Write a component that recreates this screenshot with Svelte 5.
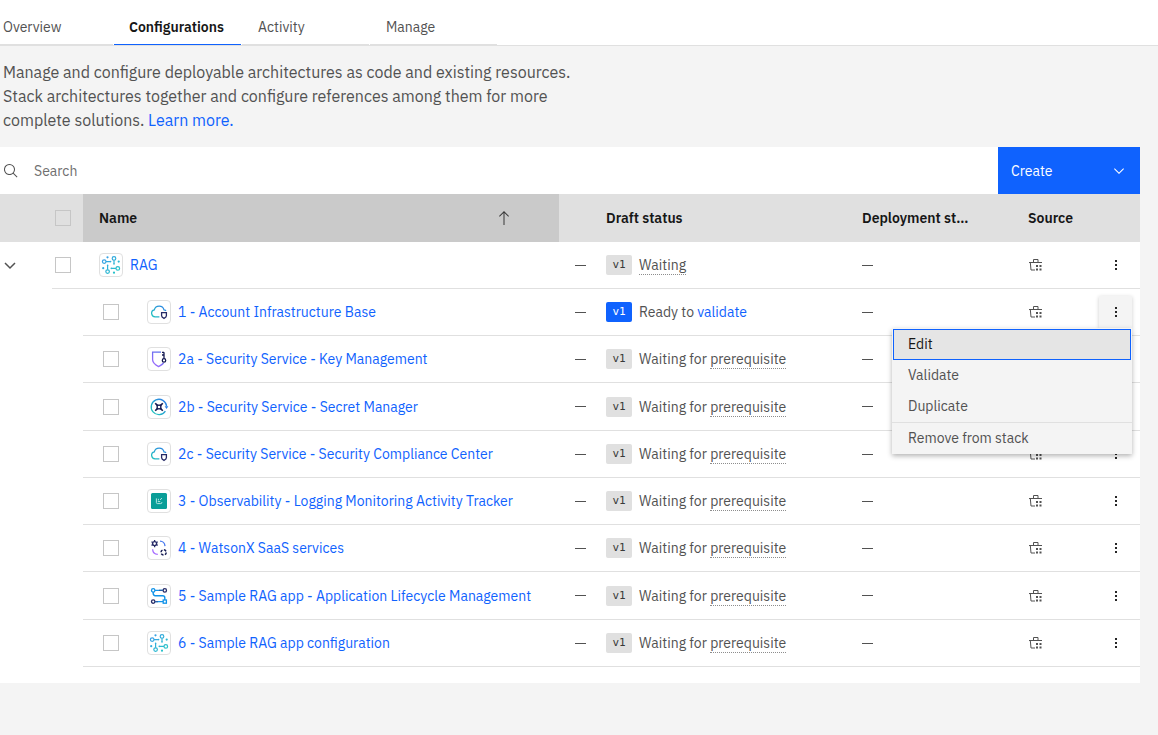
<script>
  const tabs = ['Overview', 'Configurations', 'Activity', 'Manage'];
  const active = 'Configurations';

  const rows = [
    { name: 'RAG', icon: 'network', parent: true, text: '', term: 'Waiting' },
    { name: '1 - Account Infrastructure Base', icon: 'cloud', text: 'Ready to ', link: 'validate', open: true },
    { name: '2a - Security Service - Key Management', icon: 'key', text: 'Waiting for ', term: 'prerequisite' },
    { name: '2b - Security Service - Secret Manager', icon: 'secret', text: 'Waiting for ', term: 'prerequisite' },
    { name: '2c - Security Service - Security Compliance Center', icon: 'cloud', text: 'Waiting for ', term: 'prerequisite' },
    { name: '3 - Observability - Logging Monitoring Activity Tracker', icon: 'observe', text: 'Waiting for ', term: 'prerequisite' },
    { name: '4 - WatsonX SaaS services', icon: 'services', text: 'Waiting for ', term: 'prerequisite' },
    { name: '5 - Sample RAG app - Application Lifecycle Management', icon: 'pipeline', text: 'Waiting for ', term: 'prerequisite' },
    { name: '6 - Sample RAG app configuration', icon: 'network', text: 'Waiting for ', term: 'prerequisite' }
  ];

  const actions = ['Edit', 'Validate', 'Duplicate', 'Remove from stack'];
</script>

<svg class="defs" width="0" height="0" aria-hidden="true">
  <defs>
    <linearGradient id="teal" gradientUnits="userSpaceOnUse" x1="4" y1="20" x2="20" y2="4">
      <stop offset="0.1" stop-color="#20c5bd" /><stop offset="0.9" stop-color="#2f80e8" />
    </linearGradient>
    <linearGradient id="aqua" gradientUnits="userSpaceOnUse" x1="4" y1="4" x2="20" y2="20">
      <stop offset="0" stop-color="#3a9bea" /><stop offset="1" stop-color="#25c9c4" />
    </linearGradient>
    <linearGradient id="violet" gradientUnits="userSpaceOnUse" x1="6" y1="20" x2="18" y2="5">
      <stop offset="0" stop-color="#a66bff" /><stop offset="1" stop-color="#4b6fe8" />
    </linearGradient>
  </defs>
</svg>

{#snippet tile(kind)}
  <svg class="tile" viewBox="1 1 22 22" fill="none" aria-hidden="true">
    {#if kind === 'network'}
      <g stroke="url(#aqua)" stroke-width="1.2">
        <circle cx="15" cy="5.4" r="1.8" /><circle cx="5.2" cy="8.6" r="1.8" />
        <circle cx="18.8" cy="15.4" r="1.8" /><circle cx="8.6" cy="18.6" r="1.8" />
        <path d="M15 7.2V11M7 8.6h4.5M17 15.4h-4.6M8.6 16.8V12" />
      </g>
      <g fill="url(#aqua)">
        <circle cx="8.5" cy="4.3" r="1.1" /><circle cx="19.7" cy="8.6" r="1.1" />
        <circle cx="4.2" cy="15.2" r="1.1" /><circle cx="15" cy="19.7" r="1.1" />
        <circle cx="15" cy="11" r="0.8" /><circle cx="11.6" cy="8.6" r="0.8" />
        <circle cx="12.3" cy="15.4" r="0.8" /><circle cx="8.6" cy="12.2" r="0.8" />
      </g>
    {:else if kind === 'cloud'}
      <path d="M12.4 16.8H8.2a3.5 3.5 0 0 1-.9-6.9 5 5 0 0 1 9.7 0 2.8 2.8 0 0 1 2 1" stroke="url(#teal)" stroke-width="1.3" />
      <path d="M14.6 12.6h4.8v3.2c0 1.2-1 1.9-2.4 2.6-1.4-.7-2.4-1.4-2.4-2.6z" stroke="#262a66" stroke-width="1.3" />
    {:else if kind === 'key'}
      <path d="M14 5.2H5.6v7.6c0 3.5 2.6 5 6 6.8 2.5-1.3 4-2.2 5-3.6" stroke="url(#violet)" stroke-width="1.3" />
      <circle cx="17" cy="13.4" r="1.7" stroke="#141a52" stroke-width="1.3" />
      <path d="M17 11.7V5.2M17 5.4h-2M17 8h-2" stroke="#141a52" stroke-width="1.3" />
    {:else if kind === 'secret'}
      <path d="M18.4 16.2a7.7 7.7 0 1 1 1.2-5" stroke="url(#teal)" stroke-width="1.3" />
      <path d="M17.6 11.2h3.8l-1.9 2.8z" fill="#2f80e8" />
      <rect x="10.2" y="10.2" width="3.6" height="3.6" stroke="#141a52" stroke-width="1.4" />
      <path d="M8.2 8.2l2.2 2.2M15.8 8.2l-2.2 2.2M8.2 15.8l2.2-2.2M15.8 15.8l-2.2-2.2" stroke="#141a52" stroke-width="1.6" />
    {:else if kind === 'observe'}
      <rect x="4" y="4" width="16" height="16" rx="1.5" fill="#0a9e98" />
      <path d="M9.4 9.4v4.2a1 1 0 0 0 1 1h3.4a1 1 0 0 0 1-1v-.6M11.4 9.8v1.6M13 10.8l2-1.6M10.8 12.6h2.4" stroke="#b5e6e2" stroke-width="1" />
    {:else if kind === 'services'}
      <circle cx="7.6" cy="7.6" r="2" stroke="#262a66" stroke-width="1.4" />
      <path d="M7.6 4v1.4M7.6 9.8v1.4M4.5 5.8l1.2.7M9.5 8.7l1.2.7M10.7 5.8l-1.2.7M5.7 8.7l-1.2.7" stroke="#262a66" stroke-width="1.3" />
      <path d="M13 5.2c2.6 0 4.8 2 5 4.9" stroke="#4b7cf0" stroke-width="1.3" />
      <path d="M5.6 13.2c.2 2.8 2.4 5 5.2 5.2" stroke="#a66bff" stroke-width="1.3" />
      <circle cx="16.6" cy="16.4" r="2.6" stroke="#141a52" stroke-width="1.5" stroke-dasharray="2.6 1.48" />
    {:else}
      <circle cx="6.2" cy="6.4" r="1.7" stroke="#1192e8" stroke-width="1.3" />
      <circle cx="17.8" cy="6.4" r="1.7" stroke="#262a66" stroke-width="1.3" />
      <circle cx="6.2" cy="17.6" r="1.7" stroke="#262a66" stroke-width="1.3" />
      <rect x="16.2" y="16" width="3.2" height="3.2" stroke="#1192e8" stroke-width="1.3" />
      <path d="M8 6.4h8M6.2 8.1v1.5c0 1.3.8 2.1 2.1 2.1h7.4c1.3 0 2.1.8 2.1 2.1V16M8 17.6h8" stroke="#1192e8" stroke-width="1.4" />
      <path d="M12 6.4h4M8 17.6h3" stroke="#2d5fa8" stroke-width="1.3" />
    {/if}
  </svg>
{/snippet}

<nav>
  {#each tabs as tab}
    <a href="#{tab}" class:active={tab === active}>{tab}</a>
  {/each}
</nav>

<main>
  <p class="intro">
    Manage and configure deployable architectures as code and existing resources.
    Stack architectures together and configure references among them for more
    complete solutions. <a href="#learn">Learn more.</a>
  </p>

  <section>
    <div class="toolbar">
      <label class="search">
        <svg width="16" height="16" viewBox="0 0 32 32" fill="#525252" aria-hidden="true">
          <path d="M29 27.586l-7.552-7.552a11.018 11.018 0 1 0-1.414 1.414L27.586 29zM4 13a9 9 0 1 1 9 9 9.01 9.01 0 0 1-9-9z" />
        </svg>
        <input type="text" placeholder="Search" aria-label="Search" />
      </label>
      <button class="create">
        Create
        <svg width="16" height="16" viewBox="0 0 16 16" fill="#fff" aria-hidden="true"><path d="M8 11L3 6l.7-.7L8 9.6l4.3-4.3.7.7z" /></svg>
      </button>
    </div>

    <table>
      <colgroup>
        <col class="c-expand" /><col class="c-select" /><col /><col class="c-dash" />
        <col class="c-draft" /><col class="c-deploy" /><col class="c-source" /><col class="c-menu" />
      </colgroup>
      <thead>
        <tr>
          <th></th>
          <th><input type="checkbox" aria-label="Select all" /></th>
          <th class="sorted">
            <div class="sort">
              Name
              <svg width="16" height="16" viewBox="0 0 32 32" fill="#393939" aria-hidden="true"><path d="M16 2L6 12l1.4 1.4L15 5.8V30h2V5.8l7.6 7.6L26 12z" /></svg>
            </div>
          </th>
          <th></th>
          <th>Draft status</th>
          <th class="sortable">Deployment status</th>
          <th>Source</th>
          <th></th>
        </tr>
      </thead>
      <tbody>
        {#each rows as row}
          <tr class:child={!row.parent}>
            <td>
              {#if row.parent}
                <button class="expand" aria-label="Collapse {row.name}">
                  <svg width="16" height="16" viewBox="0 0 16 16" fill="none" stroke="#525252" stroke-width="1.5" aria-hidden="true"><path d="M3 5l5 5 5-5" /></svg>
                </button>
              {/if}
            </td>
            <td>
              {#if row.parent}<input type="checkbox" aria-label="Select {row.name}" />{/if}
            </td>
            <td class="name">
              <div class="entry">
                {#if !row.parent}<input type="checkbox" aria-label="Select {row.name}" />{/if}
                <span class="label">
                  {@render tile(row.icon)}
                  <a href="#config">{row.name}</a>
                </span>
              </div>
            </td>
            <td class="dash"><i></i></td>
            <td>
              <div class="status">
                <span class="tag" class:ready={row.link}>v1</span>
                <span>{row.text}{#if row.link}<a href="#validate">{row.link}</a>{:else}<span class="term">{row.term}</span>{/if}</span>
              </div>
            </td>
            <td class="dash"><i></i></td>
            <td>
              <svg width="16" height="16" viewBox="0 0 16 16" fill="none" stroke="#525252" aria-hidden="true">
                <path d="M5.5 5.5v-3h4.5v3M1 5.5h13M2.3 5.5l.7 7.5h4" />
                <path d="M8 8h2v2H8zM11.5 8h2v2h-2zM8 11.5h2v2H8zM11.5 11.5h2v2h-2z" fill="#525252" stroke="none" />
              </svg>
            </td>
            <td class="menu-cell">
              <button class="more" class:open={row.open} aria-label="Actions for {row.name}">
                <svg width="16" height="16" viewBox="0 0 16 16" fill="#262626" aria-hidden="true">
                  <path d="M7 3h2v2H7zM7 7h2v2H7zM7 11h2v2H7z" />
                </svg>
              </button>
              {#if row.open}
                <div class="menu" role="menu">
                  {#each actions as action, i}
                    <button role="menuitem" class:focused={i === 0} class:divided={i === 3}>{action}</button>
                  {/each}
                </div>
              {/if}
            </td>
          </tr>
        {/each}
      </tbody>
    </table>
  </section>
</main>

<style>
  :global(body) {
    background: #f4f4f4;
    color: #525252;
    font: 14px/18px 'IBM Plex Sans', Roboto, 'Liberation Sans', sans-serif;
  }
  .defs { position: absolute; }
  a { color: #0f62fe; text-decoration: none; }
  button { border: 0; padding: 0; background: none; font: inherit; color: inherit; cursor: pointer; }
  svg { display: block; flex: none; }

  nav {
    display: flex;
    align-items: flex-end;
    gap: 1px;
    height: 45px;
    background: #fff;
    border-bottom: 1px solid #e0e0e0;
  }
  nav a {
    box-sizing: border-box;
    width: 127px;
    padding: 8px 16px;
    color: #525252;
    border-bottom: 1px solid #e0e0e0;
  }
  nav a:first-child { width: 113px; padding-left: 3px; }
  nav a.active {
    padding: 8px 15px;
    color: #161616;
    font-weight: 600;
    border-bottom-color: #0f62fe;
  }

  main { padding: 14px 18px 0 0; }
  .intro { max-width: 580px; margin: 0 0 15px; padding-left: 3px; font-size: 16px; line-height: 24px; }

  section { background: #fff; padding-bottom: 16px; }
  .toolbar { display: flex; height: 47px; }
  .search { flex: 1; display: flex; align-items: center; gap: 15px; padding-left: 3px; }
  .search input { flex: 1; border: 0; outline: 0; padding: 0; background: none; font: inherit; color: #161616; }
  .search input::placeholder { color: #6f6f6f; opacity: 1; }
  .create {
    display: flex;
    align-items: center;
    justify-content: space-between;
    width: 142px;
    padding: 0 13px;
    background: #0f62fe;
    color: #fff;
  }

  table { width: 100%; table-layout: fixed; border-collapse: separate; border-spacing: 0; }
  .c-expand { width: 52px; }
  .c-select { width: 31px; }
  .c-dash { width: 31px; }
  .c-draft { width: 256px; }
  .c-deploy { width: 166px; }
  .c-source { width: 79px; }
  .c-menu { width: 49px; }
  th {
    height: 48px;
    padding: 0 16px;
    background: #e0e0e0;
    color: #161616;
    font-weight: 600;
    text-align: left;
    white-space: nowrap;
    overflow: hidden;
    text-overflow: ellipsis;
    box-sizing: border-box;
  }
  th:nth-child(2), td:nth-child(2) { padding: 0 3px; }
  th.sorted, th.sortable { padding-right: 47px; }
  th.sorted { background: #cacaca; }
  th.sortable { padding-right: 40px; }
  .sort { display: flex; justify-content: space-between; align-items: center; }

  td { height: 47px; box-sizing: border-box; padding: 0 16px; border-bottom: 1px solid #e0e0e0; }
  tr:nth-child(4n) td { height: 48px; }
  td:first-child { border: 0; padding: 0 2px; }
  .child td:nth-child(2) { border: 0; }
  input[type='checkbox'] {
    appearance: none;
    display: block;
    flex: none;
    width: 16px;
    height: 16px;
    margin: 0;
    border: 1px solid #c6c6c6;
  }
  .expand { display: block; }
  .entry { display: flex; align-items: center; gap: 28px; }
  .child .name { padding-left: 20px; padding-right: 0; }
  .label { display: flex; align-items: center; gap: 7px; white-space: nowrap; }
  .tile { box-sizing: border-box; width: 24px; height: 24px; border: 1px solid #e0e0e0; border-radius: 4px; background: #fff; }
  .dash i { display: block; width: 11px; height: 1px; background: #525252; }
  .status { display: flex; align-items: center; gap: 7px; white-space: nowrap; }
  .tag {
    width: 26px;
    border-radius: 2px;
    background: #e0e0e0;
    color: #393939;
    font: 11px/20px 'DejaVu Sans Mono', monospace;
    text-align: center;
  }
  .tag.ready { background: #0f62fe; color: #fff; }
  .term { border-bottom: 1px dotted #8d8d8d; }

  .menu-cell { position: relative; padding: 0 8px; }
  .more { display: flex; align-items: center; justify-content: center; width: 33px; height: 32px; }
  .more.open { background: #f4f4f4; box-shadow: 0 1px 4px rgba(0, 0, 0, 0.2); }
  .menu {
    position: absolute;
    z-index: 1;
    top: 39px;
    right: 8px;
    width: 240px;
    box-sizing: border-box;
    padding: 1px 0 0;
    background: #f4f4f4;
    box-shadow: 0 2px 5px rgba(0, 0, 0, 0.3);
  }
  .menu button { display: block; width: 100%; padding: 0 16px; line-height: 31px; text-align: left; }
  .menu .focused {
    width: auto;
    min-width: calc(100% - 2px);
    margin: 0 1px;
    padding: 0 15px;
    background: #e5e5e5;
    color: #161616;
    outline: 1px solid #0f62fe;
    outline-offset: -1px;
  }
  .menu .divided { border-top: 1px solid #e0e0e0; }
</style>
